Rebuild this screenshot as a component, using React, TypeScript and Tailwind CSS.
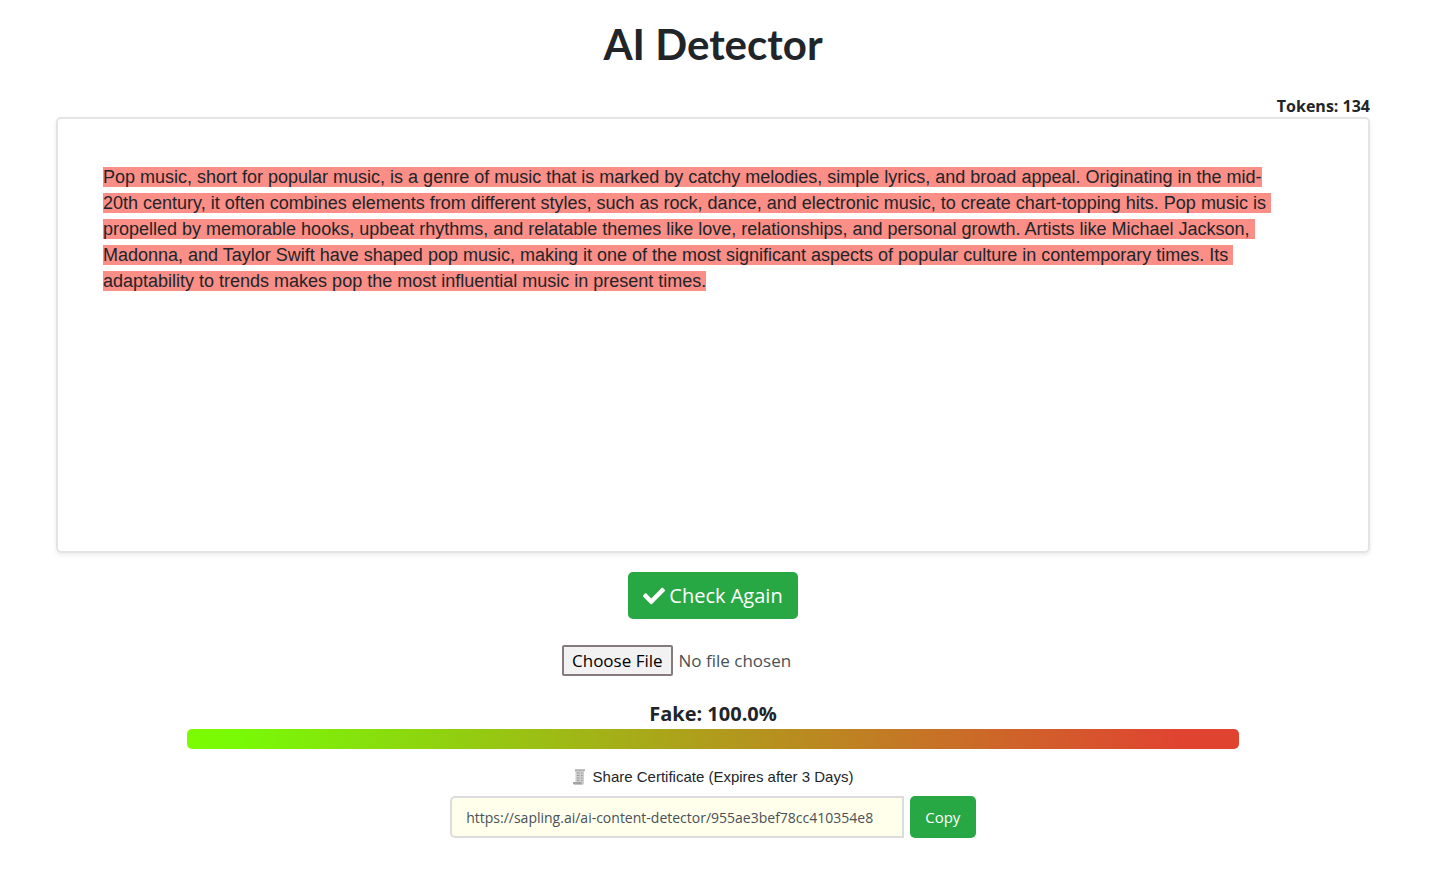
import { useRef } from 'react';
import { FaCheck } from 'react-icons/fa';

const TEXT =
  'Pop music, short for popular music, is a genre of music that is marked by catchy melodies, simple lyrics, and broad appeal. Originating in the mid-20th century, it often combines elements from different styles, such as rock, dance, and electronic music, to create chart-topping hits. Pop music is propelled by memorable hooks, upbeat rhythms, and relatable themes like love, relationships, and personal growth. Artists like Michael Jackson, Madonna, and Taylor Swift have shaped pop music, making it one of the most significant aspects of popular culture in contemporary times. Its adaptability to trends makes pop the most influential music in present times.';

const SHARE_URL = 'https://sapling.ai/ai-content-detector/955ae3bef78cc410354e8';

function ReceiptIcon() {
  return (
    <svg width="12" height="16" viewBox="0 0 12 16" aria-hidden="true">
      <path d="M2 .5h10v1.8h-1v12.200a1.300 1.300 0 0 1-1.500 1H1.200A1.200 1.200 0 0 1 0 14.300V13h2.500V3H2z" fill="#cdcdcd" />
      <path d="M0 13h8.500c0 1.500.6 2.500 1.500 2.500H1.300C.5 15.500 0 14.500 0 13z" fill="#a2a2a2" />
      <path d="M2 1h10M4 4h2.500M8 4h1.500M4 6.500h2.500M8 6.500h1.500M4 9h2.500M8 9h1.500M4 11.300h2.500M8 11.300h1.500" stroke="#9a9a9a" strokeWidth="1" />
    </svg>
  );
}

export default function App() {
  const urlRef = useRef<HTMLInputElement>(null);

  const copyUrl = () => {
    urlRef.current?.select();
    navigator.clipboard?.writeText(SHARE_URL);
  };

  return (
    <main className="flex flex-col items-center pt-4 pr-[66px] pb-8 pl-14 font-['Open_Sans',sans-serif] text-[#212529]">
      <h1 className="font-['Lato',sans-serif] text-[42px] leading-[56px] font-bold">AI Detector</h1>

      <div className="mt-6 w-full text-right text-[16px] leading-[21px] font-bold">Tokens: 134</div>

      {/* Editable text with the flagged sentences highlighted */}
      <div
        role="textbox"
        aria-label="Text to check"
        aria-multiline="true"
        contentEditable
        suppressContentEditableWarning
        spellCheck={false}
        className="min-h-[436px] w-full rounded-[5px] border-2 border-[#e4e4e4] py-[45px] pr-[85px] pl-[45px] font-['Liberation_Sans',Arial,sans-serif] text-[18px] leading-[26px] whitespace-pre-wrap shadow-[0_2px_4px_rgba(0,0,0,0.08)] outline-none"
      >
        <span className="bg-[#fb8e87]">{TEXT}</span>
      </div>

      <button
        type="button"
        className="mt-[19px] flex h-[47px] items-center gap-1 rounded-[5px] bg-[#28a745] px-[15px] text-[20px] text-white"
      >
        <FaCheck size={22} />
        Check Again
      </button>

      <input
        type="file"
        aria-label="Upload a file"
        className="mt-[26px] w-[302px] text-[17px] leading-6 text-[#495057] file:mr-1.5 file:h-[31px] file:rounded-[2px] file:border-2 file:border-solid file:border-[#857a80] file:bg-[#f2f2f2] file:px-2 file:text-black"
      />

      <div className="mt-[23px] text-[20px] leading-[30px] font-bold">Fake: 100.0%</div>
      <div className="h-5 w-4/5 rounded-[5px] bg-[linear-gradient(to_right,#7cfc00,#78fa06_5%,#b09c1c_50%,#e04431_94%,#e04431)]" />

      <button
        type="button"
        className="mt-[17px] flex items-center gap-2 font-['Liberation_Sans',Arial,sans-serif] text-[15px] leading-[22px]"
      >
        <ReceiptIcon />
        Share Certificate (Expires after 3 Days)
      </button>

      <div className="mt-2 flex w-2/5 gap-1.5">
        <input
          ref={urlRef}
          type="text"
          readOnly
          aria-label="Certificate link"
          value={SHARE_URL}
          className="h-[42px] min-w-0 flex-1 rounded-l-[5px] border-2 border-[#dcdcdc] bg-[#ffffec] px-3.5 text-[14px] text-[#495057]"
        />
        <button type="button" onClick={copyUrl} className="h-[42px] w-[66px] rounded-[5px] bg-[#28a745] text-[15px] text-white">
          Copy
        </button>
      </div>
    </main>
  );
}
